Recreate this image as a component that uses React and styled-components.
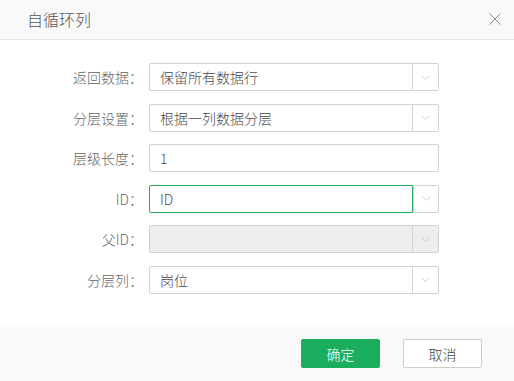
import React from 'react';
import styled, { createGlobalStyle } from 'styled-components';

const GlobalStyle = createGlobalStyle`
  html, body {
    margin: 0;
    padding: 0;
    background: #fff;
  }
  * {
    box-sizing: border-box;
  }
`;

const Dialog = styled.div`
  width: 514px;
  height: 381px;
  display: flex;
  flex-direction: column;
  font-family: "Noto Sans CJK SC", "Noto Sans", sans-serif;
  font-weight: 300;
  background: #fff;
`;

const Header = styled.div`
  height: 40px;
  display: flex;
  align-items: center;
  justify-content: space-between;
  padding: 0 12px 1px 27px;
  background: #f9f9f9;
  border-bottom: 1px solid #e6e6e6;
`;

const Title = styled.div`
  font-size: 16px;
  color: #555;
`;

const CloseButton = styled.div`
  width: 14px;
  height: 14px;
  display: flex;
  align-items: center;
  justify-content: center;
`;

const Body = styled.div`
  flex: 1;
  padding: 23px 0 0 0;
  display: flex;
  flex-direction: column;
  gap: 12.5px;
`;

const Row = styled.div`
  display: grid;
  grid-template-columns: 143px 290px;
  column-gap: 6px;
  align-items: center;
  height: 28px;
`;

const Label = styled.div`
  text-align: right;
  font-size: 14px;
  color: #666;
`;

const Field = styled.div`
  height: 28px;
  display: flex;
  border: 1px solid ${(p) => (p.focused ? '#1fae5f' : '#d2d2d2')};
  border-radius: 2px;
  background: ${(p) => (p.disabled ? '#eeeeee' : '#fff')};
`;

const Value = styled.div`
  flex: 1;
  display: flex;
  align-items: center;
  padding-left: 10px;
  font-size: 14px;
  color: #4a4a4a;
`;

const Combo = styled.div`
  height: 28px;
  display: flex;
`;

const ComboInput = styled(Field)`
  flex: 1;
  border-radius: 2px 0 0 2px;
`;

const Arrow = styled.div`
  width: 26px;
  display: flex;
  align-items: center;
  justify-content: center;
  border: 1px solid #d2d2d2;
  border-left: ${(p) => (p.joined ? 'none' : '1px solid #d2d2d2')};
  border-radius: 0 2px 2px 0;
  background: ${(p) => (p.disabled ? '#eeeeee' : '#fff')};
`;

const Footer = styled.div`
  height: 54px;
  background: #f9f9f9;
  display: flex;
  align-items: center;
  justify-content: flex-end;
  padding: 0 32px 1px 0;
  gap: 23px;
`;

const Button = styled.button`
  width: 79px;
  height: 29px;
  border-radius: 2px;
  font-family: inherit;
  font-weight: 300;
  font-size: 14px;
  cursor: pointer;
  border: 1px solid ${(p) => (p.primary ? '#1aae5e' : '#cccccc')};
  background: ${(p) => (p.primary ? '#1aae5e' : '#fff')};
  color: ${(p) => (p.primary ? '#fff' : '#444')};
`;

function Chevron() {
  return (
    <svg width="9" height="5" viewBox="0 0 9 5">
      <path d="M0.5 0.5 L4.5 4.5 L8.5 0.5" fill="none" stroke="#cfcfcf" strokeWidth="1" />
    </svg>
  );
}

function SelectRow({ label, value, focused, disabled }) {
  return (
    <Row>
      <Label>{label}</Label>
      <Combo>
        <ComboInput focused={focused} disabled={disabled}>
          <Value>{value}</Value>
        </ComboInput>
        <Arrow joined={!focused} disabled={disabled}>
          <Chevron />
        </Arrow>
      </Combo>
    </Row>
  );
}

export default function App() {
  return (
    <>
      <GlobalStyle />
      <Dialog>
        <Header>
          <Title>自循环列</Title>
          <CloseButton>
            <svg width="12" height="12" viewBox="0 0 12 12">
              <path d="M0.5 0.5 L11.5 11.5 M11.5 0.5 L0.5 11.5" stroke="#888" strokeWidth="1" />
            </svg>
          </CloseButton>
        </Header>
        <Body>
          <SelectRow label="返回数据：" value="保留所有数据行" />
          <SelectRow label="分层设置：" value="根据一列数据分层" />
          <Row>
            <Label>层级长度：</Label>
            <Field>
              <Value>1</Value>
            </Field>
          </Row>
          <SelectRow label="ID：" value="ID" focused />
          <SelectRow label="父ID：" value="" disabled />
          <SelectRow label="分层列：" value="岗位" />
        </Body>
        <Footer>
          <Button primary>确定</Button>
          <Button>取消</Button>
        </Footer>
      </Dialog>
    </>
  );
}
